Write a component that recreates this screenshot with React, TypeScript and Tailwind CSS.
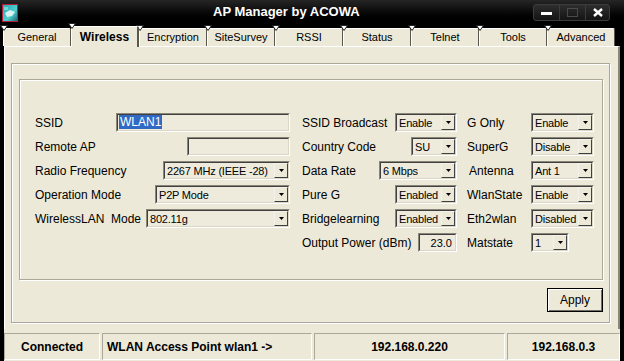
import type { ReactNode } from "react";

const tabs = [
  "General",
  "Wireless",
  "Encryption",
  "SiteSurvey",
  "RSSI",
  "Status",
  "Telnet",
  "Tools",
  "Advanced",
];

function Notch() {
  return (
    <svg
      className="absolute -left-[4px] -top-[4px]"
      width="8"
      height="6"
      viewBox="0 0 8 6"
    >
      <path d="M0.5 0.5h7L4 5.5z" fill="#fff" stroke="#222" strokeWidth="1" />
    </svg>
  );
}

function Sunken({
  children,
  className = "",
}: {
  children?: ReactNode;
  className?: string;
}) {
  return (
    <div
      className={`flex h-[19px] border border-t-[#8A8778] border-l-[#8A8778] border-b-white border-r-white ${className}`}
    >
      <div className="flex min-w-0 flex-1 border border-t-[#404040] border-l-[#404040] border-b-[#DAD6C6] border-r-[#DAD6C6] bg-[#EEEBDD]">
        {children}
      </div>
    </div>
  );
}

function Select({ value, className = "" }: { value: string; className?: string }) {
  return (
    <Sunken className={className}>
      <span className="flex-1 overflow-hidden whitespace-nowrap pl-[2px] text-[11px] leading-[16px] tracking-[-0.2px]">
        {value}
      </span>
      <div className="flex w-[14px] items-center justify-center border border-t-[#F4F2EA] border-l-[#F4F2EA] border-b-[#404040] border-r-[#404040] bg-[#ECE9D8]">
        <svg width="5" height="3" viewBox="0 0 5 3">
          <path d="M0 0h5L2.5 3z" fill="#000" />
        </svg>
      </div>
    </Sunken>
  );
}

function Row({ label, children }: { label: string; children: ReactNode }) {
  return (
    <div className="flex h-[19px] items-center justify-between">
      <span className="whitespace-pre text-[12px] leading-none">{label}</span>
      {children}
    </div>
  );
}

function Row3({ label, children, indent = false }: { label: string; children: ReactNode; indent?: boolean }) {
  return (
    <div className="flex h-[19px] items-center">
      <span className={`w-[64px] text-[12px] leading-none ${indent ? "pl-[2px]" : ""}`}>{label}</span>
      {children}
    </div>
  );
}

function AppIcon() {
  return (
    <svg width="16" height="18" viewBox="0 0 16 18">
      <defs>
        <linearGradient id="ic" x1="0" y1="0" x2="1" y2="1">
          <stop offset="0" stopColor="#2aa6b0" />
          <stop offset="0.6" stopColor="#4fd0d0" />
          <stop offset="1" stopColor="#1b5e70" />
        </linearGradient>
      </defs>
      <rect x="0.5" y="0.5" width="15" height="17" fill="url(#ic)" stroke="#b0203a" />
      <path d="M3 9l5-3 5 2-3 4-5 1z" fill="#e8f6f6" opacity="0.9" />
      <rect x="2" y="3" width="4" height="3" fill="#6fd8d8" />
    </svg>
  );
}

export default function App() {
  return (
    <div className="flex h-[361px] w-[624px] flex-col overflow-hidden bg-black font-['Liberation_Sans',Arial,sans-serif] text-black">
      {/* title bar */}
      <div className="flex h-[24px] items-center bg-gradient-to-b from-[#262626] via-[#0a0a0a] to-black">
        <div className="ml-[2px] mt-[1px]">
          <AppIcon />
        </div>
        <span className="ml-[195px] text-[13px] font-bold text-white">AP Manager by ACOWA</span>
        <div className="ml-auto mr-[14px] flex h-[17px] overflow-hidden rounded-[3px] border border-[#3c3c3c] bg-gradient-to-b from-[#2e2e2e] to-[#141414]">
          <div className="flex w-[26px] items-center justify-center border-r border-[#3c3c3c]">
            <div className="mt-[3px] h-[3px] w-[11px] bg-white" />
          </div>
          <div className="flex w-[26px] items-center justify-center border-r border-[#3c3c3c]">
            <div className="h-[9px] w-[11px] border border-[#4a4a4a]" />
          </div>
          <div className="flex w-[23px] items-center justify-center">
            <svg width="10" height="9" viewBox="0 0 10 9">
              <path d="M1 1l8 7M9 1l-8 7" stroke="#fff" strokeWidth="2.4" />
            </svg>
          </div>
        </div>
      </div>

      {/* tabs */}
      <div className="flex h-[22px] items-end pl-[3px]">
        {tabs.map((t) =>
          t === "Wireless" ? (
            <div
              key={t}
              className="relative z-10 -mb-[1px] flex h-[21px] w-[68px] items-center justify-center rounded-t-[2px] border-l border-r-2 border-t border-l-white border-r-[#5a584e] border-t-white bg-[#ECE9D8] text-[12px] font-bold"
            >
              <Notch />
              {t}
            </div>
          ) : (
            <div
              key={t}
              className="relative flex h-[18px] w-[68px] items-center justify-center rounded-t-[2px] border-l border-r border-t border-l-white border-r-[#5a584e] border-t-white bg-[#ECE9D8] text-[11px]"
            >
              <Notch />
              {t}
            </div>
          )
        )}
      </div>

      {/* panel */}
      <div className="mx-[4px] h-[283px] border-l border-r-2 border-t border-l-white border-r-[#8A8778] border-t-white bg-[#ECE9D8] pl-[6px] pt-[16px]">
        <div className="flex h-[260px] w-[599px] flex-col border border-[#ACA899] shadow-[inset_1px_1px_0_#fff,1px_1px_0_#fff]">
          <div className="ml-[7px] mt-[15px] h-[201px] w-[584px] border border-[#ACA899] pl-[15px] pt-[33px] shadow-[inset_1px_1px_0_#fff,1px_1px_0_#fff]">
            <div className="flex">
              {/* column 1 */}
              <div className="flex w-[255px] flex-col gap-[5px]">
                <Row label="SSID">
                  <Sunken className="w-[174px]">
                    <span className="ml-px h-[14px] bg-[#316AC5] px-px text-[12px] leading-[14px] text-white">WLAN1</span>
                  </Sunken>
                </Row>
                <Row label="Remote AP">
                  <Sunken className="w-[103px]" />
                </Row>
                <Row label="Radio Frequency">
                  <Select value="2267 MHz (IEEE -28)" className="w-[127px]" />
                </Row>
                <Row label="Operation Mode">
                  <Select value="P2P Mode" className="w-[135px]" />
                </Row>
                <Row label="WirelessLAN  Mode">
                  <Select value="802.11g" className="w-[144px]" />
                </Row>
              </div>

              {/* column 2 */}
              <div className="ml-[12px] flex w-[155px] flex-col gap-[5px]">
                <Row label="SSID Broadcast">
                  <Select value="Enable" className="w-[62px]" />
                </Row>
                <Row label="Country Code">
                  <Select value="SU" className="w-[46px]" />
                </Row>
                <Row label="Data Rate">
                  <Select value="6 Mbps" className="w-[78px]" />
                </Row>
                <Row label="Pure G">
                  <Select value="Enabled" className="w-[62px]" />
                </Row>
                <Row label="Bridgelearning">
                  <Select value="Enabled" className="w-[62px]" />
                </Row>
                <Row label="Output Power (dBm)">
                  <Sunken className="w-[39px]">
                    <span className="flex-1 pr-[3px] text-right text-[11px] leading-[16px]">23.0</span>
                  </Sunken>
                </Row>
              </div>

              {/* column 3 */}
              <div className="ml-[10px] flex w-[127px] flex-col gap-[5px]">
                <Row3 label="G Only">
                  <Select value="Enable" className="w-[63px]" />
                </Row3>
                <Row3 label="SuperG">
                  <Select value="Disable" className="w-[63px]" />
                </Row3>
                <Row3 label="Antenna" indent>
                  <Select value="Ant 1" className="w-[63px]" />
                </Row3>
                <Row3 label="WlanState">
                  <Select value="Enable" className="w-[63px]" />
                </Row3>
                <Row3 label="Eth2wlan">
                  <Select value="Disabled" className="w-[63px]" />
                </Row3>
                <Row3 label="Matstate">
                  <Select value="1" className="w-[38px]" />
                </Row3>
              </div>
            </div>
          </div>

          <div className="mr-[6px] mt-[8px] flex justify-end">
            <button className="flex h-[24px] w-[56px] items-center justify-center border border-black bg-[#ECE9D8] text-[12px] shadow-[inset_1px_1px_0_#fff,inset_-1px_-1px_0_#716F64]">
              Apply
            </button>
          </div>
        </div>
      </div>

      {/* status bar */}
      <div className="mx-[4px] flex h-[32px] gap-[2px] bg-[#ECE9D8] pt-[4px] text-[12px] font-bold">
        <div className="flex h-[27px] w-[96px] items-center justify-center border border-b-white border-l-[#ACA899] border-r-white border-t-[#ACA899]">
          Connected
        </div>
        <div className="flex h-[27px] w-[210px] items-center border border-b-white border-l-[#ACA899] border-r-white border-t-[#ACA899] pl-[4px]">
          WLAN Access Point wlan1 -&gt;
        </div>
        <div className="flex h-[27px] w-[191px] items-center justify-center border border-b-white border-l-[#ACA899] border-r-white border-t-[#ACA899]">
          192.168.0.220
        </div>
        <div className="flex h-[27px] flex-1 items-center justify-center border border-b-white border-l-[#ACA899] border-r-white border-t-[#ACA899]">
          192.168.0.3
        </div>
      </div>
    </div>
  );
}
